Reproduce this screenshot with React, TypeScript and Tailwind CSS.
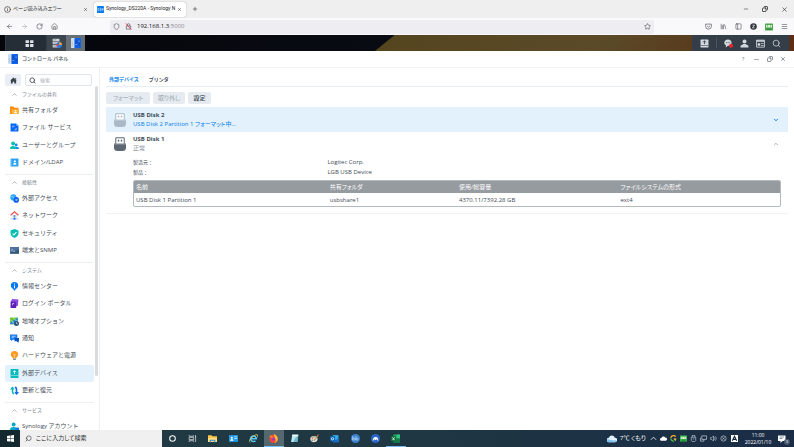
import type { ReactNode } from "react";
import { clsx } from "clsx";
import {
  ArrowLeft,
  ArrowRight,
  ChevronDown,
  ChevronUp,
  Copy,
  House,
  Info,
  Library,
  Menu,
  Minus,
  PanelLeft,
  Plus,
  RotateCw,
  Search,
  Shield,
  Star,
  X,
} from "lucide-react";

interface SvgProps {
  children: ReactNode;
  className?: string;
}

function Svg({ children, className = "size-2" }: SvgProps) {
  return (
    <svg viewBox="0 0 16 16" className={clsx("shrink-0", className)} fill="none" aria-hidden="true">
      {children}
    </svg>
  );
}

interface IconButtonProps {
  label: string;
  children: ReactNode;
  className?: string;
}

function IconButton({ label, children, className }: IconButtonProps) {
  return (
    <button type="button" aria-label={label} className={clsx("flex items-center justify-center", className)}>
      {children}
    </button>
  );
}

/* ---------- Browser ---------- */

function TabStrip() {
  return (
    <div className="flex h-[18px] items-center bg-[#efefef] text-[5px] text-[#222]">
      <div className="flex w-[94px] items-center gap-0.5 pr-1.5 pl-1">
        <Info className="size-[7px] shrink-0" />
        <span className="flex-1 whitespace-nowrap">ページ読み込みエラー</span>
        <IconButton label="タブを閉じる">
          <X className="size-[5px]" />
        </IconButton>
      </div>
      <div className="flex h-[15px] w-[92px] items-center gap-0.5 rounded-xs bg-white pr-1 pl-[3px] shadow-[0_0_1px_rgba(0,0,0,0.5)]">
        <Svg className="size-[7px]">
          <rect width="16" height="16" rx="1" fill="#0a7cf0" />
          <path
            d="M2 5.500v5h1q2 0 2-2.500t-2-2.500zM9.500 5.500h-2q-1 0-1 1.200t1 1.200h1q1 0 1 1.300t-1 1.300h-2M11.500 10.500v-5l1.300 3 1.300-3v5"
            stroke="#fff"
          />
        </Svg>
        <span className="flex-1 font-[Roboto,sans-serif] whitespace-nowrap">Synology_DS220A - Synology N</span>
        <IconButton label="タブを閉じる">
          <X className="size-[5px]" />
        </IconButton>
      </div>
      <IconButton label="新しいタブ" className="ml-1.5">
        <Plus className="size-[6px]" />
      </IconButton>
      <div className="ml-auto flex gap-[13px] pr-1.5">
        <IconButton label="最小化">
          <Minus className="size-[6px]" />
        </IconButton>
        <IconButton label="元に戻す">
          <Copy className="size-[6px] -scale-x-100" strokeWidth={3} />
        </IconButton>
        <IconButton label="閉じる">
          <X className="size-[7px]" />
        </IconButton>
      </div>
    </div>
  );
}

function NavBar() {
  return (
    <div className="flex h-[17px] items-center bg-[#f9f9fb] text-[#4c4c54]">
      <div className="flex w-[110px] gap-2 pl-1.5">
        <IconButton label="戻る">
          <ArrowLeft className="size-[7px]" />
        </IconButton>
        <IconButton label="進む">
          <ArrowRight className="size-[7px] text-[#aaa]" />
        </IconButton>
        <IconButton label="再読み込み">
          <RotateCw className="size-[7px]" />
        </IconButton>
        <IconButton label="ホーム">
          <House className="size-[7px]" />
        </IconButton>
      </div>
      <div className="flex h-[14px] flex-1 items-center gap-[5px] rounded-xs bg-[#eeedf2] px-[3px]">
        <Shield className="size-[7px]" />
        <Svg className="size-[7px]">
          <path d="M5 7V4.500a3 3 0 0 1 6 0V7M3 7h10v7H3z" stroke="#555" strokeWidth="1.500" />
          <path d="M2 1l12 14" stroke="#e22850" strokeWidth="1.800" />
        </Svg>
        <span className="flex-1 text-[6px] text-[#8a8a90]">
          <span className="text-[#15141a]">192.168.1.3</span>:5000
        </span>
        <IconButton label="ブックマークに追加">
          <Star className="size-[7px]" />
        </IconButton>
      </div>
      <div className="flex w-[140px] items-center justify-end gap-2 pr-1.5">
        <IconButton label="Pocket">
          <Svg className="size-[7px]">
            <path d="M1.500 2.500h13V8a6.500 6 0 0 1-13 0z" stroke="currentColor" strokeWidth="1.500" />
            <path d="M4.500 6.500L8 9.500l3.500-3" stroke="currentColor" strokeWidth="1.500" />
          </Svg>
        </IconButton>
        <IconButton label="ライブラリ">
          <Library className="size-[7px]" />
        </IconButton>
        <IconButton label="サイドバー">
          <PanelLeft className="size-[7px]" />
        </IconButton>
        <IconButton label="アカウント">
          <Svg className="size-[7px]">
            <circle cx="8" cy="8" r="7.500" fill="#34363f" />
            <path d="M5.500 5h5l-5 6h5" stroke="#fff" strokeWidth="1.500" />
          </Svg>
        </IconButton>
        <IconButton label="拡張機能">
          <Svg className="size-[8px]">
            <rect y="1" width="16" height="14" rx="1" fill="#4aa84c" />
            <path d="M2 4h12v5H2z" fill="#d9f2d4" />
            <path d="M4 6h2M10 6h2M3 12h10" stroke="#287a2c" strokeWidth="1.500" />
          </Svg>
        </IconButton>
        <IconButton label="メニュー">
          <Menu className="size-[7px]" />
        </IconButton>
      </div>
    </div>
  );
}

/* ---------- DSM desktop ---------- */

function ControlPanelIcon({ className }: { className?: string }) {
  return (
    <Svg className={className}>
      <rect width="9" height="16" rx="1" fill="#d3deeb" />
      <path d="M2 6v7" stroke="#9fb3c9" />
      <rect x="5.500" width="10.500" height="16" rx="1" fill="#0f62e8" />
      <path d="M8.500 3v10M13 3v10" stroke="#0a3fa8" strokeWidth="1.200" />
      <path d="M7.500 10.500h2M12 5h2" stroke="#a9cbff" strokeWidth="1.500" />
    </Svg>
  );
}

function DesktopBar() {
  return (
    <div className="flex h-4 bg-[linear-gradient(141deg,#04060a_0%,#080b12_48.400%,#55451f_48.600%,#5a4a28_75%,#59361a_92%,#5e2c14_100%)] pl-[5px]">
      <IconButton label="メインメニュー" className="w-[42px] border-x border-[#333c46] bg-[#252d36]">
        <Svg className="ml-[7px] size-[9px]">
          <path d="M1 2h6v5H1zM9 2h6v5H9zM1 9h6v5H1zM9 9h6v5H9z" fill="#dfe4e8" />
        </Svg>
      </IconButton>
      <IconButton label="リソース モニター" className="w-[19px] bg-[#3c444c]">
        <Svg className="size-[10px]">
          <path d="M1 1h11v4H1zM1 6h11v4H1zM1 11h11v4H1z" fill="#cbd1d6" />
          <path d="M2.500 3h4M2.500 8h4M2.500 13h4" stroke="#7d8890" />
          <circle cx="11.500" cy="11" r="4.500" fill="#1a7cf0" />
          <path d="M11.500 11V6.500A4.500 4.500 0 0 1 16 11z" fill="#ff9a1f" />
          <path d="M11.500 11l-3.500 3A4.500 4.500 0 0 1 7.500 9z" fill="#e94848" />
        </Svg>
      </IconButton>
      <IconButton label="コントロール パネル" className="w-[19px] bg-[#656d75]">
        <ControlPanelIcon className="size-[10px]" />
      </IconButton>
      <div className="mr-[5px] ml-auto flex w-[97px] items-center justify-between bg-[#343e49] px-2 text-[#d3d8dd]">
        <IconButton label="外部デバイス">
          <Svg className="size-[9px]">
            <rect x="1" y="1" width="14" height="14" rx="1" fill="currentColor" />
            <path d="M8 9V3.500M5.500 6L8 3l2.500 3" stroke="#343e49" strokeWidth="1.500" />
            <path d="M1 11.500h14" stroke="#343e49" />
          </Svg>
        </IconButton>
        <span className="h-2.5 w-px bg-[#4c5661]" />
        <IconButton label="通知">
          <Svg className="size-[9px]">
            <path
              d="M7 1c4 0 6.500 2.500 6.500 5.500S11 12 7 12l-4 3 .5-4C1.500 10 .5 8.500.5 6.500.5 3.500 3 1 7 1z"
              fill="currentColor"
            />
            <path d="M3.500 6.500h1.500M6.500 6.500H8M9.500 6.500H11" stroke="#343e49" strokeWidth="1.500" />
            <circle cx="12.500" cy="12" r="3.500" fill="#f0252d" />
          </Svg>
        </IconButton>
        <IconButton label="個人設定">
          <Svg className="size-[9px]">
            <circle cx="8" cy="4.500" r="3.500" fill="currentColor" />
            <path d="M1 15v-3l5-3h4l5 3v3z" fill="currentColor" />
          </Svg>
        </IconButton>
        <IconButton label="ウィジェット">
          <Svg className="size-[9px]">
            <path d="M1 2h14v12.500H1z" stroke="currentColor" strokeWidth="1.500" />
            <path d="M1 2h14v3H1zM3 7.500h4.500V12H3zM9 7.500h4.500V9H9zM9 10.500h4.500V12H9z" fill="currentColor" />
          </Svg>
        </IconButton>
        <IconButton label="検索">
          <Search className="size-[9px]" />
        </IconButton>
      </div>
    </div>
  );
}

function WindowTitle() {
  return (
    <header className="flex h-[17px] items-center gap-1 border-b border-[#f0f2f5] bg-white pr-2 pl-2 text-[#414b55]">
      <ControlPanelIcon className="size-[10px]" />
      <h1 className="flex-1 text-[5px] font-medium [font-feature-settings:normal]">コントロール パネル</h1>
      <div className="flex items-center gap-[7px] text-[#6d7780]">
        <button type="button" aria-label="ヘルプ" className="w-[6px] text-[6px]">
          ?
        </button>
        <IconButton label="最小化">
          <Minus className="size-[7px]" />
        </IconButton>
        <IconButton label="元に戻す">
          <Copy className="size-[6px] -scale-x-100" strokeWidth={3} />
        </IconButton>
        <IconButton label="閉じる">
          <X className="size-[6px]" strokeWidth={3} />
        </IconButton>
      </div>
    </header>
  );
}

/* ---------- Sidebar ---------- */

interface NavItem {
  label: string;
  icon: ReactNode;
  active?: boolean;
}

interface NavGroup {
  title: string;
  height: string;
  items: NavItem[];
}

const NAV_GROUPS: NavGroup[] = [
  {
    title: "ファイルの共有",
    height: "h-[69px]",
    items: [
      {
        label: "共有フォルダ",
        icon: (
          <>
            <path d="M0 1h6l2 2h7v11H0z" fill="#f88c0c" />
            <path d="M3 6h13v8H3z" fill="#ffb43d" />
            <circle cx="10" cy="8.500" r="1.500" fill="#fff" />
            <path d="M7 13q0-2.500 3-2.500t3 2.500z" fill="#fff" />
          </>
        ),
      },
      {
        label: "ファイル サービス",
        icon: (
          <>
            <path d="M1 1h10l4 4v10H1z" fill="#0768f5" />
            <path d="M11 1l4 4h-4z" fill="#6bb2ff" />
            <path d="M5 8V5.500h3M11 9v3H8" stroke="#fff" />
          </>
        ),
      },
      {
        label: "ユーザーとグループ",
        icon: (
          <>
            <circle cx="11" cy="7" r="2.500" fill="#1688ef" />
            <path d="M6 14q0-4 5-4t5 4z" fill="#1688ef" />
            <circle cx="5.500" cy="4.500" r="3.500" fill="#0abfb0" />
            <path d="M0 14q0-5 5.500-5T11 14z" fill="#0abfb0" />
          </>
        ),
      },
      {
        label: "ドメイン/LDAP",
        icon: (
          <>
            <rect x="1" y="1" width="14" height="14" rx="1" fill="#2ba3f5" />
            <path d="M1 4h2M1 8h2M1 12h2" stroke="#fff" />
            <circle cx="8.500" cy="6" r="1.800" fill="#fff" />
            <path d="M5.500 12q0-3.500 3-3.500t3 3.500z" fill="#fff" />
          </>
        ),
      },
    ],
  },
  {
    title: "接続性",
    height: "h-[69px]",
    items: [
      {
        label: "外部アクセス",
        icon: (
          <>
            <circle cx="6" cy="6" r="5.500" fill="#2aa5f8" />
            <path d="M2 4l4 1 1 4" stroke="#b9e4ff" />
            <circle cx="11" cy="10.500" r="5" fill="#0b62ec" />
            <path d="M9 10.500h4M11.500 9l1.500 1.500-1.500 1.500" stroke="#fff" />
          </>
        ),
      },
      {
        label: "ネットワーク",
        icon: (
          <>
            <path d="M3 7h10v5H3z" fill="#e4eaf0" />
            <path d="M1 7.500L8 1.500l7 6" stroke="#e8524a" strokeWidth="2.200" />
            <path d="M6.500 7.500h3v3h-3z" fill="#5c88b5" />
            <path d="M1 14h14" stroke="#83b5f0" strokeWidth="1.200" />
            <circle cx="8" cy="13.700" r="2" fill="#176fea" />
          </>
        ),
      },
      {
        label: "セキュリティ",
        icon: (
          <>
            <path d="M8 0l7 2.500V8q0 5-7 8-7-3-7-8V2.500z" fill="#05bdb2" />
            <path d="M4.500 8L7 10.500 11.500 5.500" stroke="#fff" strokeWidth="1.800" />
          </>
        ),
      },
      {
        label: "端末とSNMP",
        icon: (
          <>
            <path d="M0 2h16v12H0z" fill="#35587f" />
            <path d="M0 2h16v4L0 12z" fill="#4d739e" />
            <path d="M2.500 5l2 2-2 2M6 9.500h3" stroke="#fff" />
          </>
        ),
      },
    ],
  },
  {
    title: "システム",
    height: "h-[121px]",
    items: [
      {
        label: "情報センター",
        icon: (
          <>
            <path
              d="M8 0a6.500 6.500 0 0 1 6.500 6.500c0 3-2.500 5-4 6L8 16l-2.500-3.500c-1.500-1-4-3-4-6A6.500 6.500 0 0 1 8 0z"
              fill="#0a7af2"
            />
            <path d="M8 2.500v2M8 6v5" stroke="#fff" strokeWidth="1.800" />
          </>
        ),
      },
      {
        label: "ログイン ポータル",
        icon: (
          <>
            <path d="M4 0l11 1-1 11-3 1L1 5z" fill="#8c4be0" />
            <path d="M1 5h10v11H1z" fill="#5d22b5" />
            <path d="M4.500 11V8h3" stroke="#e5d8fa" strokeWidth="1.300" />
          </>
        ),
      },
      {
        label: "地域オプション",
        icon: (
          <>
            <path d="M0 1h14v12H0z" fill="#65c52e" />
            <path d="M0 10L14 1v5L5 13H0z" fill="#2b8fe0" />
            <path d="M0 4l9 9M5 1l9 8" stroke="#e5f7d8" />
            <circle cx="11.500" cy="11.500" r="4.500" fill="#2a5478" />
            <path d="M11.500 9v3H14" stroke="#fff" />
          </>
        ),
      },
      {
        label: "通知",
        icon: (
          <>
            <path d="M0 1h13v9H5l-3 3v-3H0z" fill="#167cf2" />
            <path d="M8 7h8v6h-1v3l-3-3H8z" fill="#0954c4" />
            <path d="M3 4h7M3 6.500h4" stroke="#fff" />
          </>
        ),
      },
      {
        label: "ハードウェアと電源",
        icon: (
          <>
            <path
              d="M8 0a6.500 6.500 0 0 1 6.500 6.500c0 3-3 4.500-3.500 6.500H5c-.5-2-3.500-3.500-3.500-6.500A6.500 6.500 0 0 1 8 0z"
              fill="#fa9a20"
            />
            <path d="M6 5.500l2 2 2-2M8 7.500V12" stroke="#fff" />
            <path d="M5.500 14.500h5" stroke="#747e88" strokeWidth="2.500" />
          </>
        ),
      },
      {
        label: "外部デバイス",
        active: true,
        icon: (
          <>
            <rect x="1" width="14" height="16" rx="1" fill="#08b9bd" />
            <path d="M8 9V3M5.500 5.500L8 3l2.500 2.500" stroke="#fff" strokeWidth="1.500" />
            <path d="M1 11.500h14" stroke="#b7f0ef" />
          </>
        ),
      },
      {
        label: "更新と復元",
        icon: (
          <>
            <path d="M4.500 2v8.500q0 3 3 3" stroke="#06b8b5" strokeWidth="2.800" />
            <path d="M0 6l4.500-5L8 6z" fill="#06b8b5" />
            <path d="M8.500 2.500q3 0 3 3V14" stroke="#0b6bea" strokeWidth="2.800" />
            <path d="M8 10.500h8L11.500 16z" fill="#0b6bea" />
          </>
        ),
      },
    ],
  },
  {
    title: "サービス",
    height: "h-[17px]",
    items: [
      {
        label: "Synology アカウント",
        icon: (
          <>
            <circle cx="6.500" cy="4.500" r="3.500" fill="#0aa7c4" />
            <path d="M0 14q0-5 6.500-5t6.500 5z" fill="#0aa7c4" />
            <path d="M10 10h6v5h-6z" fill="#1478ea" />
          </>
        ),
      },
    ],
  },
];

function Sidebar() {
  return (
    <aside className="flex w-[100px] shrink-0 overflow-hidden border-r border-[#edf0f3] bg-white pl-[5px] [font-feature-settings:normal]">
      <div className="flex-1">
        <div className="flex h-[18px] items-end gap-1 pr-0.5">
          <IconButton label="ホーム" className="h-3 w-4 rounded-xs bg-[#e9eef4]">
            <Svg className="size-[7px]">
              <path d="M8 1l7 6.500-1 1V15H9.800v-4H6.200v4H2V8.500l-1-1z" fill="#38424c" />
              <path d="M11.500 2H14v4z" fill="#38424c" />
            </Svg>
          </IconButton>
          <label className="flex h-3 min-w-0 flex-1 items-center gap-1 rounded-xs border border-[#e0e5ea] px-[3px]">
            <Search className="size-[7px] shrink-0 text-[#414b55]" strokeWidth={3} />
            <input
              type="search"
              aria-label="検索"
              placeholder="検索"
              className="w-full min-w-0 text-[5px] leading-[8px] outline-none placeholder:text-[#a8b0b8]"
            />
          </label>
        </div>
        <nav aria-label="コントロール パネル">
          {NAV_GROUPS.map((group, index) => (
            <section
              key={group.title}
              className={clsx("border-t pb-[3px]", index === 0 ? "border-transparent" : "border-[#edf0f3]")}
            >
              <h2 className="text-[5px] leading-[15px] text-[#7a858f]">
                <button type="button" className="flex w-full items-center gap-1 pl-1.5">
                  <ChevronUp className="size-[7px]" />
                  {group.title}
                </button>
              </h2>
              <ul className={clsx("flex flex-col justify-between", group.height)}>
                {group.items.map((item) => (
                  <li key={item.label}>
                    <a
                      href="#"
                      aria-current={item.active ? "page" : undefined}
                      className={clsx(
                        "flex h-[17px] items-center gap-[3px] rounded-xs pl-[5px] text-[6px] whitespace-nowrap text-[#414b55]",
                        item.active && "bg-[#e3f1fd]",
                      )}
                    >
                      <Svg className="size-[9px]">{item.icon}</Svg>
                      {item.label}
                    </a>
                  </li>
                ))}
              </ul>
            </section>
          ))}
        </nav>
      </div>
      <div className="mt-[18px] mr-px ml-px h-4/5 w-[3px] rounded-full bg-[#d9dcdf]" />
    </aside>
  );
}

/* ---------- External devices ---------- */

function UsbIcon({ faded }: { faded?: boolean }) {
  return (
    <svg
      viewBox="0 0 24 28"
      className={clsx("h-[14px] w-3 shrink-0", faded ? "text-[#a8b8c6]" : "text-[#5d6873]")}
      aria-hidden="true"
    >
      <path d="M3.500 1.500h17V15h-17z" fill="#fff" stroke="currentColor" strokeWidth="2" />
      <path d="M7.500 5.500h3V9h-3zM13.500 5.500h3V9h-3z" fill="currentColor" />
      <path d="M0 13h24v8q0 7-7 7H7q-7 0-7-7z" fill="currentColor" />
      <path d="M0 13h24v2H0z" fill="#fff" opacity=".35" />
    </svg>
  );
}

const ACTIONS = [
  { label: "フォーマット", disabled: true, width: "w-11" },
  { label: "取り外し", disabled: true, width: "w-8" },
  { label: "設定", disabled: false, width: "w-[23px]" },
];

const DETAILS = [
  { label: "製造元：", value: "Logitec Corp." },
  { label: "製品：", value: "LGB USB Device" },
];

const COLUMNS = [
  { label: "名前", value: "USB Disk 1 Partition 1", width: "w-[30%]" },
  { label: "共有フォルダ", value: "usbshare1", width: "w-[20%]" },
  { label: "使用/総容量", value: "4370.11/7392.28 GB", width: "w-1/4" },
  { label: "ファイルシステムの形式", value: "ext4", width: "w-1/4" },
];

function ExternalDevices() {
  return (
    <main className="min-w-0 flex-1 bg-white px-1.5 text-[6px] text-[#414b55]">
      <div
        role="tablist"
        className="flex h-[19px] items-end gap-2.5 border-b border-[#e6edf3] pl-[3px] text-[5px] font-bold [font-feature-settings:normal]"
      >
        <button type="button" role="tab" aria-selected="true" className="relative h-[14px] leading-[14px] text-[#057feb]">
          外部デバイス
          <span className="absolute -bottom-[3px] left-1/2 size-1 -translate-x-1/2 rotate-45 border-t border-l border-[#e6edf3] bg-white" />
        </button>
        <button type="button" role="tab" aria-selected="false" className="h-[14px] leading-[14px]">
          プリンタ
        </button>
      </div>

      <div className="flex gap-[3px] pt-[5px] pb-[3px]">
        {ACTIONS.map((action) => (
          <button
            key={action.label}
            type="button"
            disabled={action.disabled}
            className={clsx(
              "h-3 rounded-xs bg-[#e6ebf1] leading-3 font-medium disabled:text-[#aab2bb]",
              action.width,
            )}
          >
            {action.label}
          </button>
        ))}
      </div>

      <section className="flex h-[25px] items-center bg-[#e3f1fd] pr-[9px] pl-2">
        <UsbIcon faded />
        <div className="ml-[7px] flex-1 leading-[9px]">
          <h2 className="font-bold">USB Disk 2</h2>
          <p className="text-[#057feb]">USB Disk 2 Partition 1 フォーマット中...</p>
        </div>
        <IconButton label="開く" className="text-[#057feb]">
          <ChevronDown className="size-[6px]" strokeWidth={4} />
        </IconButton>
      </section>

      <section className="border-b border-[#f0f3f6] pb-1.5">
        <div className="flex h-[23px] items-center pr-[9px] pl-2">
          <UsbIcon />
          <div className="ml-[7px] flex-1 leading-[9px]">
            <h2 className="font-bold">USB Disk 1</h2>
            <p className="text-[#87919b]">正常</p>
          </div>
          <IconButton label="閉じる" className="text-[#a5adb5]">
            <ChevronUp className="size-[6px]" strokeWidth={4} />
          </IconButton>
        </div>
        <div className="pr-[7px] pl-[27px]">
          <dl className="pt-0.5 pb-[3px] leading-[10px]">
            {DETAILS.map(({ label, value }) => (
              <div key={label} className="flex">
                <dt className="w-[30%] text-[5px] [font-feature-settings:normal]">{label}</dt>
                <dd>{value}</dd>
              </div>
            ))}
          </dl>
          <div className="overflow-hidden rounded-xs border border-[#b4b9bd]">
            <table className="w-full table-fixed text-left leading-[12px]">
              <thead className="bg-[#969b9f] text-white">
                <tr>
                  {COLUMNS.map((column) => (
                    <th key={column.label} scope="col" className={clsx("p-0 pl-0.5 font-normal", column.width)}>
                      {column.label}
                    </th>
                  ))}
                </tr>
              </thead>
              <tbody>
                <tr>
                  {COLUMNS.map((column) => (
                    <td key={column.label} className="p-0 pt-px pl-0.5">
                      {column.value}
                    </td>
                  ))}
                </tr>
              </tbody>
            </table>
          </div>
        </div>
      </section>
    </main>
  );
}

/* ---------- Windows taskbar ---------- */

const TASKBAR_APPS: { label: string; icon: ReactNode; active?: boolean; open?: boolean }[] = [
  { label: "Cortana", icon: <circle cx="8" cy="8" r="5" stroke="#fff" strokeWidth="1.800" /> },
  {
    label: "タスク ビュー",
    icon: <path d="M2 2v2h8V2M2 14v-2h8v2M2 6h8v4H2zM13.500 2v12M12.500 5h2" stroke="#dde3e6" strokeWidth="1.300" />,
  },
  {
    label: "エクスプローラー",
    icon: (
      <>
        <path d="M0 2h6l2 2h8v10H0z" fill="#f7c64a" />
        <path d="M0 7h16v7H0z" fill="#ffdf7c" />
        <path d="M4 15v-4h8v4" stroke="#348ee0" strokeWidth="2" />
      </>
    ),
  },
  {
    label: "連絡先",
    icon: (
      <>
        <path d="M0 2h16v12H0z" fill="#2499e8" />
        <circle cx="5" cy="6.500" r="1.800" fill="#fff" />
        <path d="M2 12q0-3 3-3t3 3z" fill="#fff" />
        <path d="M9.500 5H14M9.500 8H14" stroke="#d5efff" strokeWidth="1.500" />
      </>
    ),
  },
  {
    label: "Internet Explorer",
    icon: (
      <>
        <path d="M3.500 8.500h9.500a5 5 0 1 0-1.500 3.500" stroke="#54c6f5" strokeWidth="2.800" />
        <path d="M2 15Q-2 12 6 5.500T15.500 2q1 1-.5 4" stroke="#f5d44b" strokeWidth="1.400" />
      </>
    ),
  },
  {
    label: "Firefox",
    active: true,
    icon: (
      <>
        <circle cx="8" cy="8.500" r="7.500" fill="#f8443b" />
        <path d="M9 0q6 3 6.500 8.500T9 16q5-4 2-8T9 0z" fill="#ffc12d" />
        <path d="M1 5l1.500-3L5 4l3 1-2 2z" fill="#ff9526" />
        <circle cx="8" cy="9" r="3" fill="#a03cc0" />
      </>
    ),
  },
  {
    label: "メモ帳",
    icon: (
      <>
        <path d="M4 1h11l-2 13H2z" fill="#bce9f2" />
        <path d="M9 8l6-6-2 12H6z" fill="#69b7ca" />
        <path d="M4 2.500h10" stroke="#f7f7f7" strokeWidth="2" />
      </>
    ),
  },
  {
    label: "ペイント",
    icon: (
      <>
        <ellipse cx="7" cy="9" rx="6.500" ry="5.500" fill="#e5ddd2" />
        <circle cx="4" cy="7" r="1.300" fill="#e2483c" />
        <circle cx="7" cy="5.500" r="1.300" fill="#37a650" />
        <circle cx="4" cy="11" r="1.300" fill="#338be2" />
        <path d="M7 12l7-9" stroke="#c68d45" strokeWidth="2" />
        <path d="M13 4l2-3" stroke="#e35d36" strokeWidth="2" />
      </>
    ),
  },
  {
    label: "Outlook",
    icon: (
      <>
        <path d="M5 2h10v12H5z" fill="#36a9ed" />
        <path d="M5 7l5 4 6-4v8H5z" fill="#176dc3" />
        <rect y="4" width="9" height="9" rx="1" fill="#0864b9" />
        <circle cx="4.500" cy="8.500" r="2" stroke="#fff" strokeWidth="1.400" />
      </>
    ),
  },
  {
    label: "ブラウザー",
    icon: (
      <>
        <circle cx="8" cy="8" r="8" fill="#397fd0" />
        <path d="M3 3.500v7.500M8.500 3.500v7.500" stroke="#c2def8" strokeWidth="1.200" />
        <circle cx="5" cy="9" r="2" stroke="#c2def8" strokeWidth="1.200" />
        <circle cx="10.700" cy="9" r="2" stroke="#c2def8" strokeWidth="1.200" />
      </>
    ),
  },
  {
    label: "NordVPN",
    icon: (
      <>
        <circle cx="8" cy="8" r="8" fill="#2866cd" />
        <path d="M3 13Q3 6 8 5.500T13 13L10 9.500 8 11 6 9.500z" fill="#fff" />
      </>
    ),
  },
  {
    label: "Excel",
    open: true,
    icon: (
      <>
        <path d="M4 1h12v14H4z" fill="#1fa765" />
        <path d="M10 1h6v7h-6z" fill="#35c481" />
        <path d="M4 8h12v7H4z" fill="#167b48" />
        <rect y="4" width="9" height="9" rx="1" fill="#0d703d" />
        <path d="M2.500 6l4 5M6.500 6l-4 5" stroke="#fff" strokeWidth="1.400" />
      </>
    ),
  },
];

const TRAY: { label: string; icon: ReactNode }[] = [
  { label: "隠れているインジケーター", icon: <path d="M2 11l6-6 6 6" stroke="#fff" strokeWidth="1.800" /> },
  { label: "OneDrive", icon: <path d="M3 13a3 3 0 0 1 0-6 5 5 0 0 1 9-1 3.500 3.500 0 0 1 1 7z" fill="#fff" /> },
  {
    label: "同期",
    icon: (
      <>
        <path d="M13 4A6 6 0 0 0 2 7" stroke="#f6a821" strokeWidth="3" />
        <path d="M2 8a6 6 0 0 0 7 6" stroke="#47c353" strokeWidth="3" />
        <path d="M8 8h7l-3 6z" fill="#f3c843" />
      </>
    ),
  },
  {
    label: "モニター",
    icon: (
      <>
        <path d="M0 1h16v14H0z" fill="#39b54a" />
        <path d="M2 4h12v5H2z" fill="#e3f8df" />
        <path d="M4 6.500h2M10 6.500h2M3 12h10" stroke="#176a20" strokeWidth="1.500" />
      </>
    ),
  },
  {
    label: "USB",
    icon: <path d="M5 5V1h6v4M3 5h10v8l-2 2H5l-2-2zM6 9h4" stroke="#dfe5ea" strokeWidth="1.300" />,
  },
  { label: "ネットワーク", icon: <path d="M4 2h11v8H4zM1 6v8h8M9 10v4" stroke="#dfe5ea" strokeWidth="1.400" /> },
  {
    label: "音量",
    icon: <path d="M1 6h3l4-4v12l-4-4H1zM10 5q2 3 0 6M12.500 3q4 5 0 10" stroke="#dfe5ea" strokeWidth="1.200" />,
  },
  {
    label: "状態",
    icon: (
      <>
        <circle cx="8" cy="8" r="6" stroke="#dfe5ea" strokeWidth="1.400" />
        <path d="M5.500 5.500l5 5M10.500 5.500l-5 5" stroke="#dfe5ea" strokeWidth="1.400" />
      </>
    ),
  },
];

function Taskbar() {
  return (
    <footer className="flex h-[17px] shrink-0 items-stretch bg-linear-to-r from-[#213a43] via-[#1f3742] to-[#1a2c46] text-white">
      <IconButton label="スタート" className="w-5 bg-[#142830]">
        <Svg className="size-[7px]">
          <path d="M0 2l7-1v6.500H0zM8 1l8-1v7.500H8zM0 8.500h7V15l-7-1zM8 8.500h8V16l-8-1z" fill="#fff" />
        </Svg>
      </IconButton>
      <label className="flex w-[142px] items-center gap-1 bg-[#f0f0f0] pl-[5px] text-[#333]">
        <Search className="size-[7px] shrink-0 -scale-x-100" />
        <input
          type="text"
          aria-label="検索"
          placeholder="ここに入力して検索"
          className="w-full min-w-0 text-[6px] leading-[9px] outline-none placeholder:text-[#333]"
        />
      </label>
      <div className="flex w-[244px]">
        {TASKBAR_APPS.map((app) => (
          <IconButton
            key={app.label}
            label={app.label}
            className={clsx(
              "flex-1 border-b",
              app.active && "bg-[#56686f]",
              app.active || app.open ? "border-[#76b9ed]" : "border-transparent",
            )}
          >
            <Svg className="size-[9px]">{app.icon}</Svg>
          </IconButton>
        ))}
      </div>
      <div className="ml-auto flex items-center">
        <Svg className="size-[10px]">
          <path d="M3 13a3.500 3.500 0 0 1 0-7 5 5 0 0 1 9.500 0 3.500 3.500 0 0 1 .5 7z" fill="#dff1fd" />
          <path d="M3 13a3 3 0 0 1-2-5q4 3 14 2a3 3 0 0 1-2 3z" fill="#7cc0ee" />
        </Svg>
        <span className="ml-[3px] w-[30px] text-[6px] whitespace-nowrap">7℃ くもり</span>
        <div className="flex gap-[3px]">
          {TRAY.map((entry) => (
            <IconButton key={entry.label} label={entry.label}>
              <Svg className="size-[7px]">{entry.icon}</Svg>
            </IconButton>
          ))}
        </div>
        <Svg className="ml-1 size-[7px]">
          <path d="M0 0h16v16H0z" fill="#fff" />
          <path d="M3 13L8 3l5 10M5 10h6" stroke="#152338" strokeWidth="2.500" />
        </Svg>
        <div className="mx-1 w-8 text-center text-[5px] leading-[7px]">
          <div>11:00</div>
          <div>2022/01/10</div>
        </div>
        <IconButton label="通知" className="relative mr-2">
          <Svg className="size-[8px]">
            <path d="M0 1h15v11H9l-4 4v-4H0z" fill="#fff" />
            <path d="M3 4h9M3 7h6" stroke="#1a2c46" />
          </Svg>
          <span className="absolute -right-1 -bottom-0.5 size-[6px] rounded-full bg-[#46566c] text-center text-[4px] leading-[6px]">
            3
          </span>
        </IconButton>
      </div>
    </footer>
  );
}

export default function App() {
  return (
    <div className="flex h-screen flex-col overflow-hidden bg-white font-['Open_Sans','Noto_Sans_CJK_JP',sans-serif] [font-feature-settings:'palt']">
      <TabStrip />
      <NavBar />
      <DesktopBar />
      <div className="flex min-h-0 flex-1 flex-col">
        <WindowTitle />
        <div className="flex min-h-0 flex-1">
          <Sidebar />
          <ExternalDevices />
        </div>
      </div>
      <Taskbar />
    </div>
  );
}
